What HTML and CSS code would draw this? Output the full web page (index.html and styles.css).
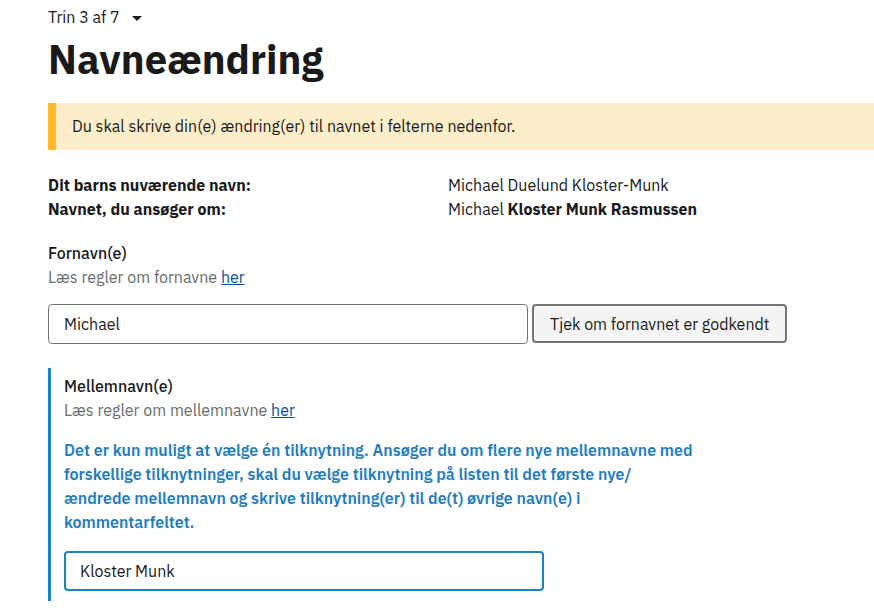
FILE: index.html
```html
<!DOCTYPE html>
<html lang="da">
<head>
  <meta charset="UTF-8" />
  <meta name="viewport" content="width=device-width, initial-scale=1.0"/>
  <title>Navneændring</title>
  <link rel="stylesheet" href="styles.css">
</head>
<body>

  <div class="page">
    <div class="step">
      <span>Trin 3 af 7</span>
      <span class="caret"></span>
    </div>

    <h1>Navneændring</h1>

    <!-- Info box -->
    <div class="alert">Du skal skrive din(e) ændring(er) til navnet i felterne nedenfor.</div>

    <div class="summary">
      <div class="summary-row">
        <span class="summary-label">Dit barns nuværende navn:</span>
        <span>Michael Duelund Kloster-Munk</span>
      </div>
      <div class="summary-row">
        <span class="summary-label">Navnet, du ansøger om:</span>
        <span>Michael <strong>Kloster Munk Rasmussen</strong></span>
      </div>
    </div>

    <!-- Fornavn -->
    <div class="field">
      <label class="field-label" for="firstName">Fornavn(e)</label>
      <div class="hint">Læs regler om fornavne <a href="#">her</a></div>
      <div class="field-row">
        <input type="text" id="firstName" class="text-input" value="Michael" />
        <button type="button" class="check-button">Tjek om fornavnet er godkendt</button>
      </div>
    </div>

    <!-- Mellemnavn -->
    <div class="field field-active">
      <label class="field-label" for="middleName">Mellemnavn(e)</label>
      <div class="hint">Læs regler om mellemnavne <a href="#">her</a></div>
      <p class="notice">Det er kun muligt at vælge én tilknytning. Ansøger du om flere nye mellemnavne med forskellige tilknytninger, skal du vælge tilknytning på listen til det første nye/ ændrede mellemnavn og skrive tilknytning(er) til de(t) øvrige navn(e) i kommentarfeltet.</p>
      <input type="text" id="middleName" class="text-input text-input-focus" value="Kloster Munk" />
    </div>
  </div>

</body>
</html>
```

FILE: styles.css
```css
body {
  margin: 0;
  font-family: "IBM Plex Sans", "Liberation Sans", Arial, sans-serif;
  font-size: 16px;
  line-height: 24px;
  color: #1a1a1a;
  background: #fff;
}
.page {
  padding: 5px 0 0 48px;
}
.step {
  display: flex;
  align-items: center;
  gap: 12px;
  height: 24px;
}
.caret {
  width: 0;
  height: 0;
  border-left: 5px solid transparent;
  border-right: 5px solid transparent;
  border-top: 5px solid #1a1a1a;
  margin-top: 2px;
}
h1 {
  margin: 6px 0 0;
  font-size: 40px;
  line-height: 48px;
  font-weight: 700;
}
.alert {
  margin-top: 20px;
  background: #fdedc9;
  border-left: 8px solid #ffb92b;
  padding: 11px 16px 12px;
}
.summary {
  margin-top: 23px;
}
.summary-row {
  display: grid;
  grid-template-columns: 400px 1fr;
}
.summary-label {
  font-weight: 700;
}
.field {
  margin-top: 20px;
}
.field-label {
  display: block;
  font-weight: 500;
}
.hint {
  color: #6b6b6b;
}
.hint a {
  color: #0b4f9c;
}
.field-row {
  display: flex;
  gap: 4px;
  margin-top: 15px;
}
.text-input {
  box-sizing: border-box;
  width: 480px;
  height: 40px;
  padding: 0 15px;
  border: 1px solid #757575;
  border-radius: 4px;
  font: inherit;
  color: #1a1a1a;
}
.check-button {
  height: 39px;
  padding: 0 16px;
  border: 2px solid #757575;
  border-radius: 4px;
  background: #f4f4f4;
  font: inherit;
  color: #1a1a1a;
}
.field-active {
  margin-top: 24px;
  border-left: 3px solid #1a82c4;
  padding: 6px 0 10px 13px;
}
.notice {
  margin: 16px 0 0;
  max-width: 630px;
  color: #1f7dbf;
  font-weight: 600;
}
.text-input-focus {
  margin-top: 17px;
  border: 2px solid #1a82c4;
  padding: 0 14px;
}
```
